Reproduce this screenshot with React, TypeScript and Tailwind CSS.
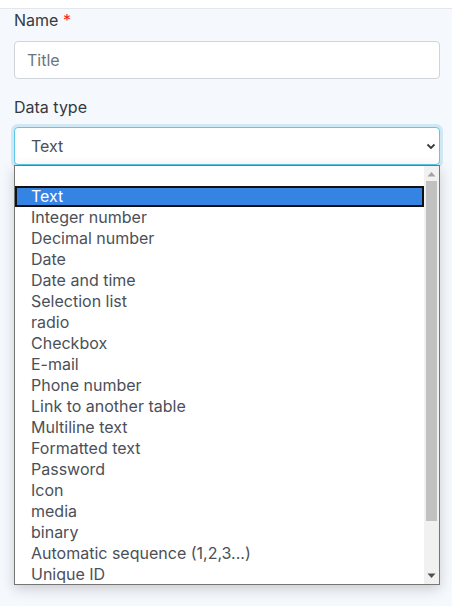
import React from "react";

const options = [
  "",
  "Text",
  "Integer number",
  "Decimal number",
  "Date",
  "Date and time",
  "Selection list",
  "radio",
  "Checkbox",
  "E-mail",
  "Phone number",
  "Link to another table",
  "Multiline text",
  "Formatted text",
  "Password",
  "Icon",
  "media",
  "binary",
  "Automatic sequence (1,2,3...)",
  "Unique ID",
];

const App = () => {
  return (
    <div
      className="min-h-[606px] bg-[#f5f8fc] text-[16px]"
      style={{ fontFamily: "Inter, 'Noto Sans', sans-serif" }}
    >
      <div className="h-[9px] bg-white border-b border-[#e3e6ea]" />
      <div className="px-[14px] pr-[12px]">
        <label className="block leading-[22px] text-[#343a40]">
          Name <span className="text-[#ff1e1e]">*</span>
        </label>
        <div className="mt-[10px] h-[38px] rounded-[4px] border border-[#ced4da] bg-white px-[12px] flex items-center text-[#6c757d]">
          Title
        </div>

        <label className="block mt-[17px] leading-[22px] text-[#343a40]">
          Data type
        </label>
        <div className="relative mt-[9px]">
          <div className="h-[38px] rounded-[4px] border border-[#5bc9ea] bg-white pl-[16px] pr-[2px] flex items-center justify-between text-[#495057] shadow-[0_0_0_3px_rgba(140,200,230,0.35)]">
            <span>Text</span>
            <svg width="12" height="12" viewBox="0 0 12 12">
              <path
                d="M2.5 4.5 L6 8 L9.5 4.5"
                fill="none"
                stroke="#343a40"
                strokeWidth="1.8"
              />
            </svg>
          </div>

          <div className="absolute left-0 right-0 top-[38px] h-[420px] border border-[#767676] bg-white shadow-[0_4px_12px_rgba(0,0,0,0.18)] flex overflow-hidden">
            <div className="flex-1 overflow-hidden">
              {options.map((o, i) =>
                o === "" ? (
                  <div key={i} className="h-[20px]" />
                ) : o === "Text" ? (
                  <div
                    key={i}
                    className="h-[21px] leading-[17px] bg-[#3584e4] border-2 border-[#111] pl-[14px] text-white"
                  >
                    {o}
                  </div>
                ) : (
                  <div
                    key={i}
                    className="h-[21px] leading-[21px] pl-[16px] text-[#4b5058] whitespace-nowrap"
                  >
                    {o}
                  </div>
                )
              )}
            </div>
            <div className="w-[15px] bg-[#f1f1f1] flex flex-col items-center">
              <svg width="9" height="6" viewBox="0 0 9 6" className="mt-[5px]">
                <path d="M0.5 5.5 L4.5 1 L8.5 5.5 Z" fill="#a3a3a3" />
              </svg>
              <div className="mt-[4px] w-[11px] h-[340px] bg-[#c1c1c1]" />
              <div className="flex-1" />
              <svg width="9" height="6" viewBox="0 0 9 6" className="mb-[5px]">
                <path d="M0.5 0.5 L8.5 0.5 L4.5 5 Z" fill="#505050" />
              </svg>
            </div>
          </div>
        </div>
      </div>
    </div>
  );
};

export default App;
